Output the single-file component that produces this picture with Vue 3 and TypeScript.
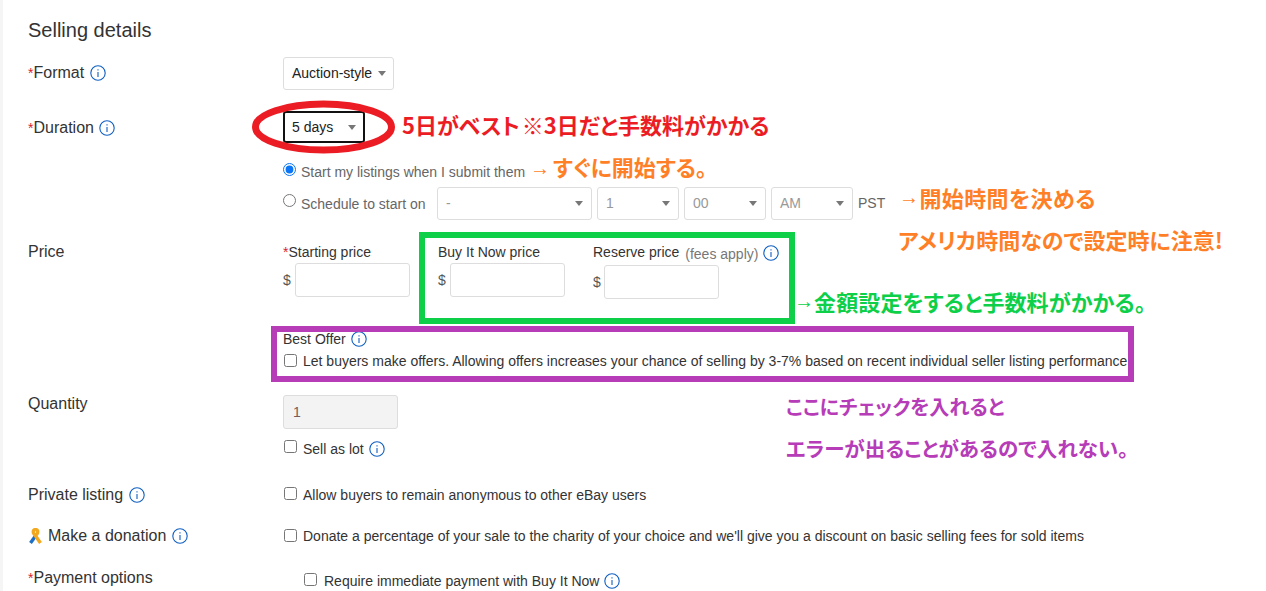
<script setup lang="ts">
const scheduleSelects = [
  { label: '-', cls: 'w155' },
  { label: '1', cls: 'w82' },
  { label: '00', cls: 'w82' },
  { label: 'AM', cls: 'w82' },
]
</script>

<template>
  <div class="page">
    <main class="form">
      <h2 class="title">Selling details</h2>

      <div class="row format-row">
        <div class="label"><i class="req">*</i>Format <svg class="info" viewBox="0 0 16 16"><circle cx="8" cy="8" r="7.2" /><path d="M8 7v5M8 4.2v1.2" /></svg></div>
        <div class="select auction">Auction-style<span class="caret tight"></span></div>
      </div>

      <div class="row duration-row">
        <div class="label"><i class="req">*</i>Duration <svg class="info" viewBox="0 0 16 16"><circle cx="8" cy="8" r="7.2" /><path d="M8 7v5M8 4.2v1.2" /></svg></div>
        <div class="select focus">5 days<span class="caret"></span></div>
      </div>

      <div class="row start-row">
        <div class="label"></div>
        <label class="opt grey"><input type="radio" name="start" checked /><span>Start my listings when I submit them</span></label>
      </div>

      <div class="row schedule-row">
        <div class="label"></div>
        <div class="schedule">
          <label class="opt grey sched"><input type="radio" name="start" /><span>Schedule to start on</span></label>
          <div v-for="s in scheduleSelects" :key="s.cls + s.label" class="select muted" :class="s.cls">{{ s.label }}<span class="caret"></span></div>
          <span class="pst">PST</span>
        </div>
      </div>

      <div class="row price-row">
        <div class="label">Price</div>
        <div class="prices">
          <div class="price p1">
            <div class="plabel"><i class="req">*</i>Starting price</div>
            <div class="money"><span>$</span><div class="input"></div></div>
          </div>
          <div class="price p2">
            <div class="plabel">Buy It Now price</div>
            <div class="money"><span>$</span><div class="input"></div></div>
          </div>
          <div class="price p3">
            <div class="plabel">Reserve price <span class="fees">(fees apply)</span><svg class="info" viewBox="0 0 16 16"><circle cx="8" cy="8" r="7.2" /><path d="M8 7v5M8 4.2v1.2" /></svg></div>
            <div class="money lower"><span>$</span><div class="input"></div></div>
          </div>
        </div>
      </div>

      <div class="row offer-row">
        <div class="label"></div>
        <div class="offer">
          <div class="offer-title">Best Offer <svg class="info" viewBox="0 0 16 16"><circle cx="8" cy="8" r="7.2" /><path d="M8 7v5M8 4.2v1.2" /></svg></div>
          <label class="opt check"><input type="checkbox" /><span>Let buyers make offers. Allowing offers increases your chance of selling by 3-7% based on recent individual seller listing performance</span></label>
        </div>
      </div>

      <div class="row quantity-row">
        <div class="label">Quantity</div>
        <div class="qty">
          <div class="input disabled">1</div>
          <label class="opt check lot"><input type="checkbox" /><span>Sell as lot <svg class="info" viewBox="0 0 16 16"><circle cx="8" cy="8" r="7.2" /><path d="M8 7v5M8 4.2v1.2" /></svg></span></label>
        </div>
      </div>

      <div class="row private-row">
        <div class="label">Private listing <svg class="info" viewBox="0 0 16 16"><circle cx="8" cy="8" r="7.2" /><path d="M8 7v5M8 4.2v1.2" /></svg></div>
        <label class="opt check"><input type="checkbox" /><span>Allow buyers to remain anonymous to other eBay users</span></label>
      </div>

      <div class="row donation-row">
        <div class="label">
          <svg class="ribbon" viewBox="0 0 15 16"><path class="blue-tail" d="M2.5 15 8.2 7" /><path class="gold-loop" d="M12.5 15 5.6 5.2C4.8 3 5.6 1.6 7.5 1.6 9.4 1.6 10.2 3 9.4 5.2L8.4 6.8" /></svg>Make a donation <svg class="info" viewBox="0 0 16 16"><circle cx="8" cy="8" r="7.2" /><path d="M8 7v5M8 4.2v1.2" /></svg>
        </div>
        <label class="opt check"><input type="checkbox" /><span>Donate a percentage of your sale to the charity of your choice and we'll give you a discount on basic selling fees for sold items</span></label>
      </div>

      <div class="row payment-row">
        <div class="label"><i class="req">*</i>Payment options</div>
        <label class="opt check pay"><input type="checkbox" /><span>Require immediate payment with Buy It Now <svg class="info" viewBox="0 0 16 16"><circle cx="8" cy="8" r="7.2" /><path d="M8 7v5M8 4.2v1.2" /></svg></span></label>
      </div>
    </main>

    <svg class="ellipse" viewBox="0 0 144 54"><ellipse cx="71.5" cy="27" rx="68" ry="23" /></svg>
    <div class="box green"></div>
    <div class="box purple"></div>

    <div class="note red n1">5日がベスト ※3日だと手数料がかかる</div>
    <div class="note orange n2"><span class="arrow">→</span> すぐに開始する。</div>
    <div class="note orange n3"><span class="arrow">→</span>開始時間を決める</div>
    <div class="note orange n4">アメリカ時間なので設定時に注意!</div>
    <div class="note green-t n5"><span class="arrow">→</span>金額設定をすると手数料がかかる。</div>
    <div class="note purple-t n6">ここにチェックを入れると</div>
    <div class="note purple-t n7">エラーが出ることがあるので入れない。</div>
  </div>
</template>

<style>
html, body { margin: 0; background: #fff; }
</style>

<style scoped>
.page {
  position: relative;
  width: 1266px;
  height: 591px;
  overflow: hidden;
  background: #fff;
  border-left: 3px solid #f5f5f5;
  box-sizing: border-box;
  font-family: "Liberation Sans", Arial, sans-serif;
  font-size: 14px;
  color: #333;
}
.form { padding: 0 0 0 25px; }
.title { margin: 0; padding-top: 19px; font-size: 20px; line-height: 22px; font-weight: 400; color: #333; }
.row { display: flex; align-items: flex-start; }
.label { flex: 0 0 255px; font-size: 16px; line-height: 20px; color: #333; white-space: nowrap; }
.req { font-style: normal; color: #d9232e; font-size: 14px; }
.info { width: 16px; height: 16px; vertical-align: -3px; margin-left: 1px; fill: none; stroke: #0f5fc2; stroke-width: 1.1; }
.select {
  position: relative; box-sizing: border-box; height: 33px; line-height: 31px;
  border: 1px solid #ddd; border-radius: 3px; background: #fff; color: #222;
  padding-left: 8px; white-space: nowrap;
}
.caret {
  position: absolute; top: 13px; right: 8px; width: 0; height: 0;
  border-left: 4.5px solid transparent; border-right: 4.5px solid transparent; border-top: 5px solid #777;
}
.caret.tight { right: 7px; }
.auction { width: 111px; }
.focus { width: 82px; height: 32px; line-height: 29px; border: 2px solid #111; padding-left: 7px; }
.focus .caret { top: 12px; right: 7px; }
.muted { color: #999; height: 33px; }
.w155 { width: 155px; margin-right: 5px; }
.w82 { width: 82px; margin-right: 5px; }
.opt { display: flex; align-items: flex-start; color: #333; white-space: nowrap; line-height: 18px; }
.opt input { margin: 0; width: 13px; height: 13px; flex: none; accent-color: #0a76f6; }
.opt span { margin-left: 7px; }
.opt.check input { margin-left: 1px; }
.opt.check span { margin-left: 6px; }
.grey { color: #666; }
.format-row { margin-top: 16px; }
.format-row .label { padding-top: 6px; }
.duration-row { margin-top: 21px; }
.duration-row .label { padding-top: 7px; }
.start-row { margin-top: 18px; height: 20px; }
.start-row .opt { padding-top: 1px; }
.start-row input { margin-top: 1px; }
.start-row .opt span { margin-left: 5px; position: relative; top: 1px; }
.schedule-row { margin-top: 6px; }
.schedule { display: flex; align-items: flex-start; }
.sched { width: 154px; padding-top: 7px; }
.sched input { margin-top: 0; }
.sched span { margin-left: 5px; position: relative; top: 1px; }
.pst { line-height: 33px; color: #666; }
.price-row { margin-top: 22px; }
.prices { display: flex; align-items: flex-start; }
.price { display: flex; flex-direction: column; }
.p1 { width: 155px; }
.p2 { width: 155px; }
.plabel { line-height: 20px; height: 20px; white-space: nowrap; color: #333; }
.fees { color: #777; margin-left: 2px; margin-right: 5px; position: relative; top: 2px; }
.p3 .info { position: relative; top: 1px; margin-left: 0; }
.money { display: flex; align-items: center; margin-top: 1px; color: #555; }
.money span { width: 12px; }
.p3 .money span { width: 11px; }
.money.lower { margin-top: 3px; }
.input { box-sizing: border-box; width: 115px; height: 34px; border: 1px solid #ddd; border-radius: 3px; background: #fff; }
.offer-row { margin-top: 31px; }
.offer-title { line-height: 18px; height: 18px; color: #333; }
.offer .opt { margin-top: 5px; }
.offer .opt input { margin-top: 1px; }
.offer .opt span { position: relative; top: -1px; }
.quantity-row { margin-top: 24px; }
.quantity-row .label { margin-top: -1px; }
.qty { display: flex; flex-direction: column; }
.disabled { background: #f3f3f3; line-height: 32px; padding-left: 9px; color: #7a5a5a; }
.lot { margin-top: 11px; }
.lot span { position: relative; top: 0; }
.private-row { margin-top: 27px; }
.private-row .opt input { margin-top: 2px; }
.private-row .opt span { position: relative; top: 1px; }
.donation-row { margin-top: 21px; }
.donation-row .opt input { margin-top: 3px; }
.donation-row .opt span { position: relative; top: 1px; }
.ribbon { width: 15px; height: 16px; vertical-align: -3px; margin-right: 5px; fill: none; stroke-width: 3.4; }
.blue-tail { stroke: #1f6fc4; }
.gold-loop { stroke: #f2a91f; }
.payment-row { margin-top: 22px; }
.pay { margin-left: 20px; }
.pay input { margin-top: 5px; }
.pay span { position: relative; top: 4px; }
.opt.check.pay span { margin-left: 7px; }

.ellipse { position: absolute; left: 249px; top: 100px; width: 144px; height: 54px; fill: none; stroke: #ec1c24; stroke-width: 7; }
.box { position: absolute; box-sizing: border-box; }
.green { left: 416px; top: 232px; width: 376px; height: 92px; border: 6px solid #0ecf48; }
.purple { left: 268px; top: 326px; width: 863px; height: 56px; border: 6px solid #b63cb8; }
.note {
  position: absolute; white-space: nowrap; font-weight: 700;
  font-family: "Noto Sans CJK JP", sans-serif; font-size: 22px; line-height: 30px;
  font-feature-settings: "palt";
}
.arrow { font-family: "Liberation Sans", sans-serif; font-weight: 400; font-size: 20px; line-height: 0; position: relative; top: -3px; }
.red { color: #ec1c24; }
.orange { color: #ff7f27; }
.green-t { color: #0ecf48; }
.purple-t { color: #b63cb8; }
.n1 { left: 399px; top: 109px; word-spacing: -3px; letter-spacing: -0.05px; }
.n2 { left: 527px; top: 151px; word-spacing: -2px; }
.n2 .arrow { top: -1px; }
.n3 { left: 896px; top: 182px; letter-spacing: 0.4px; }
.n4 { left: 895px; top: 224px; }
.n5 { left: 791px; top: 286px; letter-spacing: 0.1px; }
.n6 { left: 783px; top: 392px; font-size: 20px; }
.n7 { left: 783px; top: 433px; font-size: 20.5px; }
</style>
